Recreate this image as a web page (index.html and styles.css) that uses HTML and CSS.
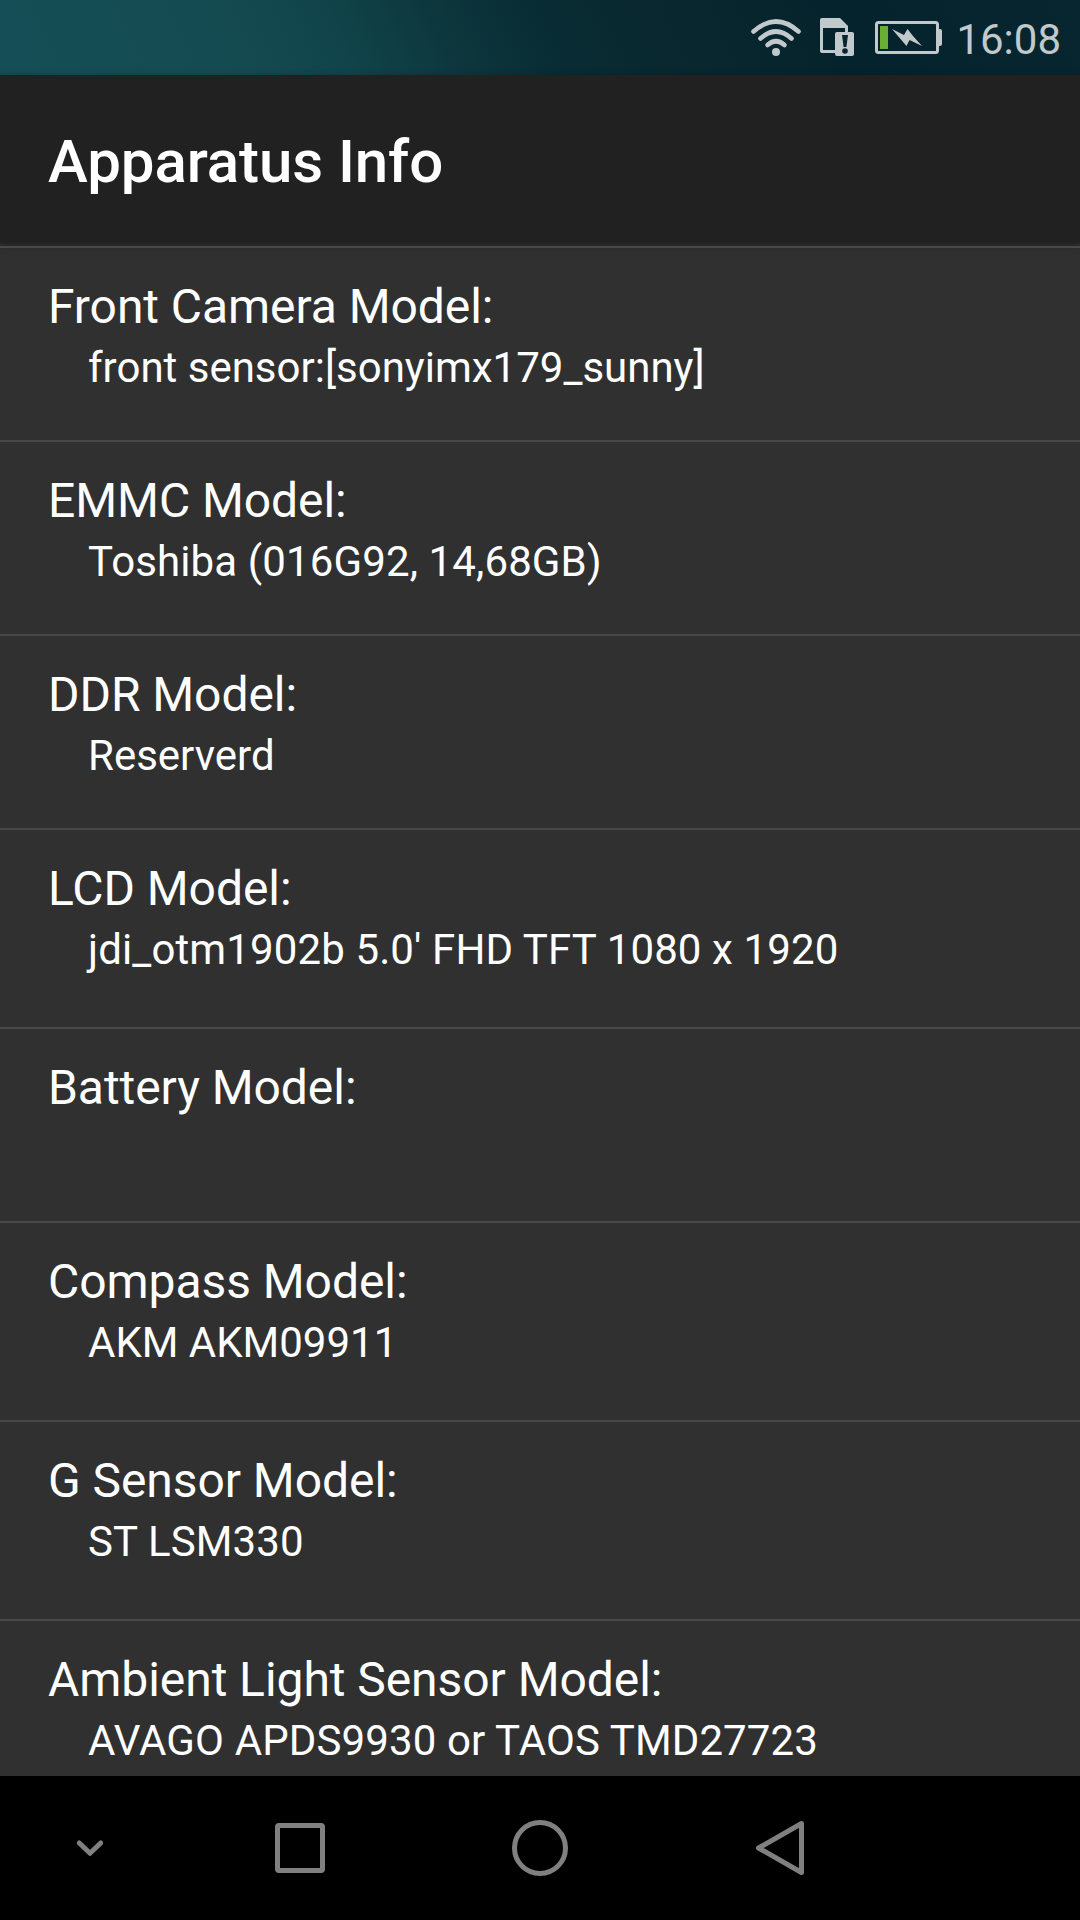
FILE: index.html
```html
<!DOCTYPE html>
<html lang="en">
<head>
    <meta charset="UTF-8">
    <title>Apparatus Info</title>

    <link rel="stylesheet" href="styles.css">
</head>
<body>

    <div class="status">
        <svg class="wifi" width="50" height="38" viewBox="0 0 50 38">
            <path d="M2.5 12.5Q25 -7.5 47.5 12.5"/>
            <path d="M9.5 19.5Q25 5.5 40.5 19.5"/>
            <path d="M16.5 26Q25 18.5 33.5 26"/>
            <circle cx="25" cy="33" r="4"/>
        </svg>
        <svg class="sim" width="34" height="38" viewBox="0 0 34 38">
            <path d="M2 0H20L28 8V14H25V10H3V32H15V35H2Q0 35 0 33V2Q0 0 2 0Z"/>
            <path d="M17 14H32Q34 14 34 16V36Q34 38 32 38H17Q15 38 15 36V16Q15 14 17 14Z"/>
            <path class="mark" d="M22 17H28L26.4 29H23.6Z"/>
            <circle class="mark" cx="25" cy="33" r="2.8"/>
        </svg>
        <svg class="battery" width="67" height="33" viewBox="0 0 67 33">
            <rect class="frame" x="1.5" y="1.5" width="61" height="30" rx="2"/>
            <path d="M64 8H65Q67 8 67 10V23Q67 25 65 25H64Z"/>
            <rect class="level" x="5" y="5" width="8" height="23"/>
            <path d="M17 8L29 14L32.5 8L38 15L47 25L34.5 19L31.5 25Z"/>
        </svg>
        <span class="clock">16:08</span>
    </div>

    <div class="header">
        <h1>Apparatus Info</h1>
    </div>

    <ul class="list">
        <li>
            <h2>Front Camera Model:</h2>
            <p>front sensor:[sonyimx179_sunny]</p>
        </li>
        <li>
            <h2>EMMC Model:</h2>
            <p class="wide">Toshiba (016G92, 14,68GB)</p>
        </li>
        <li>
            <h2>DDR Model:</h2>
            <p>Reserverd</p>
        </li>
        <li class="tall">
            <h2>LCD Model:</h2>
            <p class="wide">jdi_otm1902b 5.0' FHD TFT 1080 x 1920</p>
        </li>
        <li>
            <h2>Battery Model:</h2>
        </li>
        <li class="tall">
            <h2>Compass Model:</h2>
            <p>AKM AKM09911</p>
        </li>
        <li class="tall">
            <h2>G Sensor Model:</h2>
            <p class="wide">ST LSM330</p>
        </li>
        <li>
            <h2>Ambient Light Sensor Model:</h2>
            <p class="wide">AVAGO APDS9930 or TAOS TMD27723</p>
        </li>
    </ul>

    <div class="nav">
        <svg class="hide" viewBox="0 0 60 60">
            <path d="M19.3 25L30 35.3L40.7 25"/>
        </svg>
        <svg viewBox="0 0 60 60">
            <rect x="7.5" y="7.5" width="45" height="45" rx="1.5"/>
        </svg>
        <svg viewBox="0 0 60 60">
            <circle cx="30" cy="30" r="25.5"/>
        </svg>
        <svg viewBox="0 0 60 60">
            <path d="M51.5 5.5V54.5L8.5 30Z"/>
        </svg>
    </div>

</body>
</html>
```

FILE: styles.css
```css
* {
    margin: 0;
    padding: 0;
    box-sizing: border-box;
}

body {
    display: flex;
    flex-direction: column;
    height: 1920px;
    overflow: hidden;
    background: #303030;
    color: #fff;
    font-family: Roboto, sans-serif;
}

/* status bar */
.status {
    display: flex;
    flex: none;
    justify-content: flex-end;
    align-items: flex-start;
    height: 75px;
    padding-right: 19px;
    background: linear-gradient(65deg, #164e57 0%, #144b51 22%, #10444a 32%, #0d363d 42%, #092d35 50%, #09282f 60%, #05232c 78%, #08262f 100%);
}

.status svg {
    fill: #c1c9cc;
}

.wifi {
    margin: 19px 19px 0 0;
}

.status .wifi path {
    fill: none;
    stroke: #c1c9cc;
    stroke-width: 4.6;
    stroke-linecap: round;
}

.status .sim {
    margin: 18px 21px 0 0;
}

.status .mark {
    fill: #07252e;
}

.battery {
    margin: 21px 14px 0 0;
}

.battery .frame {
    fill: none;
    stroke: #c1c9cc;
    stroke-width: 3;
}

.battery .level {
    fill: #6aaf35;
}

.clock {
    margin-top: 15px;
    color: #c1c9cc;
    font-size: 42px;
    line-height: 49px;
}

/* title bar */
.header {
    flex: none;
    height: 168px;
    padding: 52px 48px 0;
    background: #212121;
    box-shadow: 0 2px 8px rgba(0, 0, 0, 0.35);
}

h1 {
    font-size: 60px;
    font-weight: 500;
    line-height: 70px;
    letter-spacing: -0.08px;
}

/* list */
.list {
    flex: 1;
    min-height: 0;
    padding-top: 3px;
    overflow: hidden;
    list-style: none;
}

.list li {
    height: 194px;
    padding: 31px 48px 0;
    border-top: 2px solid #484848;
}

.list .tall {
    height: 199px;
}

h2 {
    font-size: 48px;
    font-weight: 400;
    line-height: 56px;
    letter-spacing: -0.06px;
}

.list p {
    margin-top: 8px;
    padding-left: 40px;
    font-size: 42px;
    line-height: 49px;
}

.list .wide {
    letter-spacing: 0.12px;
}

/* navigation keys */
.nav {
    display: flex;
    flex: none;
    gap: 180px;
    align-items: center;
    height: 144px;
    padding-left: 60px;
    background: #000;
}

.nav svg {
    width: 60px;
    height: 60px;
    fill: none;
    stroke: #808080;
    stroke-width: 5;
    stroke-linejoin: round;
}

.nav .hide {
    margin-right: -30px;
    stroke-linecap: round;
}
```
